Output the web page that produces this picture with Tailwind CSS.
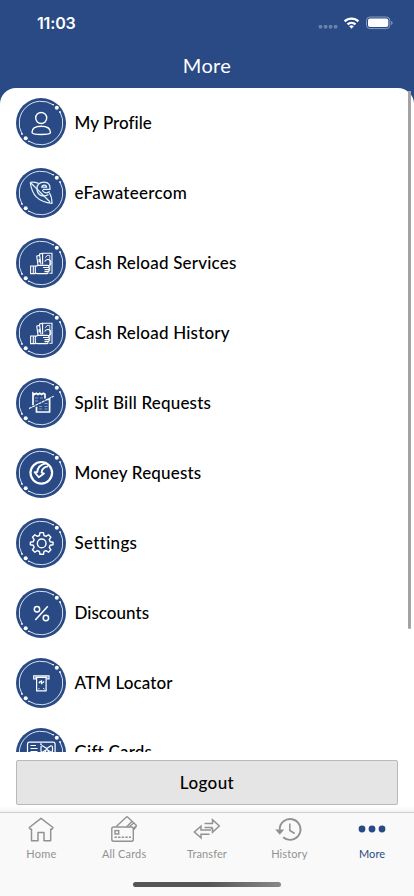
<!DOCTYPE html>
<html lang="en">
<head>
<meta charset="utf-8">
<meta name="viewport" content="width=device-width, initial-scale=1">
<title>More</title>
<script src="https://cdn.jsdelivr.net/npm/@tailwindcss/browser@4"></script>
</head>
<body class="bg-white">
<svg width="0" height="0" class="absolute">
  <defs>
    <g id="disc">
      <circle cx="25" cy="25" r="25" fill="#294a84"/>
      <g fill="none" stroke="#dfe9f3" stroke-width=".95"><path d="M37.2 6.8A22 22 0 0 0 6 36"/><path d="M44 14A22 22 0 0 1 12.8 43.2"/></g>
      <g fill="#fff"><circle cx="40.8" cy="9.7" r="2"/><circle cx="9.7" cy="40.3" r="2"/><circle cx="37.2" cy="6.8" r=".8"/><circle cx="44" cy="14" r=".9"/><circle cx="6" cy="36" r=".9"/><circle cx="12.8" cy="43.2" r=".8"/></g>
    </g>
    <g id="cash" fill="none" stroke="#fff" stroke-width="1.1">
      <path d="M26.6 26.5V15.2H36V35.2H33.4"/>
      <path d="M33.8 33V17.4H31Q30.8 19.2 28.9 19.5" stroke-width=".8"/>
      <path d="M28.7 23.6a3.2 3.2 0 1 1 3.6 4.2"/>
      <path d="M22 27L20.7 18.2L23.6 17.2L25 26.5M23.6 17.2V16L26.4 15.4"/>
      <path d="M23.2 21v3.5" stroke-width="1.4"/>
      <path d="M14.6 28H19.3V35.6H14.6ZM17.3 28V35.6"/>
      <path d="M19.3 28.5L22 27.4H31.5Q33 27.4 33 28.4T31.5 29.5H27M31.5 29.5Q33.4 29.5 33.4 30.6T32 31.6H28.5M32 31.6Q33.4 31.7 33.2 32.7T31.8 33.6H28.5M31.8 33.6Q32.6 35.6 31 35.6H21.5L19.3 35"/>
    </g>
  </defs>
</svg>
<div class="relative flex h-[896px] w-[414px] flex-col overflow-hidden bg-[#294a84] text-black" style="font-family:Lato,'Open Sans',sans-serif">
  <header class="h-[88px] shrink-0 text-white">
    <div class="flex h-[42px] items-center justify-between pr-[21px] pl-[37px]">
      <span class="pt-[4px] font-[Inter] text-[16px] leading-5 font-semibold tracking-[-0.15px]">11:03</span>
      <svg class="mt-[2px]" width="76" height="16" viewBox="317 14 76 16">
        <g fill="#6b82ac"><rect x="318.7" y="25" width="3.6" height="3.6" rx="1"/><rect x="323.8" y="25" width="3.6" height="3.6" rx="1"/><rect x="328.8" y="25" width="3.6" height="3.6" rx="1"/><rect x="333.8" y="25" width="3.6" height="3.6" rx="1"/></g>
        <g fill="none" stroke="#fff" stroke-width="2.3"><path d="M344.6 21.4a9.9 9.9 0 0 1 13.8 0"/><path d="M347.5 24.4a5.8 5.8 0 0 1 8 0"/></g>
        <path d="M349.2 26.3a3.4 3.4 0 0 1 4.6 0L351.5 28.7Z" fill="#fff"/>
        <rect x="366.5" y="17" width="23.3" height="11.6" rx="3.4" fill="none" stroke="#8a9cbf"/>
        <rect x="368" y="18.5" width="20.3" height="8.6" rx="2" fill="#fff"/>
        <path d="M391.2 21v4q1.4-.7 1.4-2t-1.4-2" fill="#8a9cbf"/>
      </svg>
    </div>
    <h1 class="flex h-[46px] items-center justify-center text-[20px] leading-6 tracking-[0.35px]">More</h1>
  </header>

  <main class="relative flex h-[724px] shrink-0 flex-col rounded-t-[16px] bg-white">
    <ul class="h-[664px] overflow-hidden pt-[10px] pl-4 text-[17px] leading-5 font-medium">
      <li class="flex h-[70px] items-start gap-[8.5px]">
        <svg class="shrink-0" width="50" height="50" viewBox="0 0 50 50"><use href="#disc"/><g fill="none" stroke="#fff" stroke-width="1.4"><circle cx="25.2" cy="20" r="5.5"/><path d="M16 34.3C16 30.2 19.5 28.2 25.2 28.2S34.5 30.5 34.5 34.6C34.5 36 30 36.5 25.2 36.5S16 36 16 34.3Z"/></g></svg>
        <span class="mt-[15px] tracking-[0.03px]">My Profile</span></li>
      <li class="flex h-[70px] items-start gap-[8.5px]">
        <svg class="shrink-0" width="50" height="50" viewBox="0 0 50 50"><use href="#disc"/><g fill="none" stroke="#e2f2fa"><path d="M14.2 14.3C16 27 22 34 36 35.3C36 31 35.4 28 33.5 25M14.2 14.3C17.5 13.8 20 14.4 22.5 15.4M14.2 14.3L34 34" stroke-width="1.2"/><path d="M21 21C20.5 16.5 23.5 14.2 28 14.2C32.5 14.2 34.5 17 34 21.3H26.8" stroke-width="1.3"/><path d="M25.8 19.2C26 16.5 30.3 16.3 30.6 19.2ZM21 21C21 26.5 26 30 32.5 26.5M26.5 22C27 25 30.5 25.6 33.8 23.6" stroke-width="1.3"/></g></svg>
        <span class="mt-[15px] tracking-[0.3px]">eFawateercom</span></li>
      <li class="flex h-[70px] items-start gap-[8.5px]">
        <svg class="shrink-0" width="50" height="50" viewBox="0 0 50 50"><use href="#disc"/><use href="#cash"/></svg>
        <span class="mt-[15px] tracking-[0.2px]">Cash Reload Services</span></li>
      <li class="flex h-[70px] items-start gap-[8.5px]">
        <svg class="shrink-0" width="50" height="50" viewBox="0 0 50 50"><use href="#disc"/><use href="#cash"/></svg>
        <span class="mt-[15px] tracking-[0.2px]">Cash Reload History</span></li>
      <li class="flex h-[70px] items-start gap-[8.5px]">
        <svg class="shrink-0" width="50" height="50" viewBox="0 0 50 50"><use href="#disc"/><g fill="none" stroke="#fff" stroke-width="1.7"><path d="M17 27.3V15.3L18.5 16.4L20.2 15.2L22 16.4L23.8 15.2L25.5 16.4L27.3 15.2L29 16.3V20.5"/><path d="M20.5 28.8V34H33.6V21.5H30.5"/><path d="M13 30.6L37.7 18.2" stroke-width="1.1" stroke-dasharray="3 .6"/><path d="M19 20h3M24 20h3M19 23h3M23 28.5h3M28.5 28.5h3M23 31h3M28.5 31h3M28.5 25.5h3" stroke="#8fa4c6" stroke-width=".9"/></g></svg>
        <span class="mt-[15px] tracking-[0.2px]">Split Bill Requests</span></li>
      <li class="flex h-[70px] items-start gap-[8.5px]">
        <svg class="shrink-0" width="50" height="50" viewBox="0 0 50 50"><use href="#disc"/><g fill="none" stroke="#fff"><circle cx="25.3" cy="24.8" r="10.8" stroke-width="2.2"/><path d="M30 15.4C25 16.3 21.6 19.2 21.2 24.2L18.6 24.2L22.8 29.3L28 25.5L25.6 24.6C25.9 21 28.4 18.8 32 18.4" stroke-width="1.8" stroke-linejoin="round"/></g></svg>
        <span class="mt-[15px] tracking-[0.18px]">Money Requests</span></li>
      <li class="flex h-[70px] items-start gap-[8.5px]">
        <svg class="shrink-0" width="50" height="50" viewBox="0 0 50 50"><use href="#disc"/><g fill="none" stroke="#fff" stroke-width="1.5" transform="translate(25.7 25.4) scale(.96) translate(-25.7 -25.4)"><circle cx="25.7" cy="25.4" r="4.5"/><path stroke-linejoin="round" d="M23.9 14.2h3.6l.6 3 2.1.9 2.6-1.7 2.5 2.5-1.7 2.6.9 2.1 3 .6v2.6l-3 .6-.9 2.1 1.7 2.6-2.5 2.5-2.6-1.7-2.1.9-.6 3h-3.6l-.6-3-2.1-.9-2.6 1.7-2.5-2.5 1.7-2.6-.9-2.1-3-.6v-2.6l3-.6.9-2.1-1.7-2.6 2.5-2.5 2.6 1.7 2.1-.9Z"/></g></svg>
        <span class="mt-[15px] tracking-[0.3px]">Settings</span></li>
      <li class="flex h-[70px] items-start gap-[8.5px]">
        <svg class="shrink-0" width="50" height="50" viewBox="0 0 50 50"><use href="#disc"/><g fill="none" stroke="#fff" stroke-width="1.5"><circle cx="21" cy="21.2" r="2.7"/><circle cx="29.9" cy="30" r="2.7"/><path d="M31.8 18.3L19.3 32"/></g></svg>
        <span class="mt-[15px] tracking-[0.02px]">Discounts</span></li>
      <li class="flex h-[70px] items-start gap-[8.5px]">
        <svg class="shrink-0" width="50" height="50" viewBox="0 0 50 50"><use href="#disc"/><g fill="none" stroke="#fff" stroke-width="1.2"><path d="M20 20.8H17.7V17.8H33V20.8H30.7M19.3 19.4H31.4"/><path d="M20.6 19.5V32.8H30.1V19.5"/><path d="M22 31.5l1.5-1.5M28.7 31.5l-1.5-1.5" stroke-width=".9"/><path d="M23 25.2Q24.3 22.7 25.4 24.2T28 23.4M25.5 22.3V26.3" stroke-width="1.3"/></g></svg>
        <span class="mt-[15px] tracking-[0.1px]">ATM Locator</span></li>
      <li class="flex h-[70px] items-start gap-[8.5px]">
        <svg class="shrink-0" width="50" height="50" viewBox="0 0 50 50"><use href="#disc"/><g fill="none" stroke="#fff" stroke-width="1.2"><rect x="11.5" y="14.2" width="27.6" height="20" rx="2"/><path d="M14.5 17.5H20M14.5 20.5H21.5M14.5 23.5H21.5" stroke-width="1"/><path d="M24 16.2h2"/><path d="M30.8 20.6L26.5 17.8Q24.8 17.6 25 19.5V23Q25.3 24.5 27 23.7L30.8 21.5L34.6 23.7Q36.3 24.5 36.5 23V19.5Q36.5 17.6 34.8 17.8ZM30 22L28 27M31.6 22L33.6 27"/></g></svg>
        <span class="mt-[14px] tracking-[0.2px]">Gift Cards</span></li>
    </ul>
    <div class="absolute top-[3px] right-[3px] h-[538px] w-[3px] rounded-b-full bg-[#a3a3a3]"></div>
    <button class="mx-4 mt-[8px] h-[45px] shrink-0 rounded-[2px] border border-[#b9b9b9] bg-[#e5e5e5] text-[17px] leading-5 font-medium tracking-[0.4px]">Logout</button>
    <div class="mt-auto h-[6px] bg-linear-to-b from-white to-[#f3f3f3]"></div>
  </main>

  <nav class="flex h-[84px] shrink-0 flex-col border-t border-[#cfcfcf] bg-[#f9f9f9]">
    <div class="grid grid-cols-5 text-center text-[11px] leading-[14px] text-[#929292]">
      <a class="flex flex-col items-center"><svg width="30" height="34" viewBox="0 0 30 34" fill="none" stroke="#929292" stroke-width="1.5"><path d="M15 5.3L3.3 14.5L4.3 16.2H5.5V27.7H12V19.5H18V27.7H24.7V16.2H25.8L27 14.5Z" stroke-linejoin="round"/></svg><span class="tracking-[0.2px]">Home</span></a>
      <a class="flex flex-col items-center"><svg width="30" height="34" viewBox="0 0 30 34" fill="none" stroke="#929292" stroke-width="1.4"><rect x="2.8" y="14" width="21.5" height="14.3" rx="1.8"/><rect x="6" y="17.6" width="3.7" height="3.4"/><path d="M5.5 24.3H22" stroke-dasharray="2.4 1.2"/><path d="M7 13.8L17.2 4.2Q18 3.5 18.8 4.2L27 12Q27.8 12.8 27 13.7L24.4 17M17.5 14L22.8 8.4M20 14L25 9.8M24 16L26.7 13.2"/></svg><span class="tracking-[0.15px]">All Cards</span></a>
      <a class="flex flex-col items-center"><svg width="30" height="34" viewBox="0 0 30 34" fill="none" stroke="#929292" stroke-width="1.5"><path d="M12.5 10.5H20.5V6.8L27.3 13L20.5 19.2V15.5H19"/><path d="M19 17H9V13.2L2.4 19L9 24.8V21.3H17.5M12.5 14.6H20.5"/></svg><span class="tracking-[0.1px]">Transfer</span></a>
      <a class="flex flex-col items-center"><svg class="-ml-[2px]" width="30" height="34" viewBox="0 0 30 34" fill="none" stroke="#929292" stroke-width="1.9"><path d="M5.7 17A10.4 10.4 0 1 1 9.2 24.2"/><path d="M1.2 16.5H10.2L5.8 21.7Z" fill="#929292" stroke="none"/><path d="M15.8 10.5V17.5L20.7 20.5" stroke-width="1.5"/></svg><span class="-ml-px tracking-[0.1px]">History</span></a>
      <a class="flex flex-col items-center text-[#294a84]"><svg class="-ml-[2px]" width="30" height="34" viewBox="0 0 30 34" fill="#294a84"><circle cx="5" cy="16" r="3.4"/><circle cx="15" cy="16" r="3.4"/><circle cx="25" cy="16" r="3.4"/></svg><span class="-ml-px tracking-[0.1px]">More</span></a>
    </div>
    <div class="mx-auto mt-[21px] h-[5px] w-[148px] rounded-full bg-linear-to-r from-[#555] via-[#555] to-[#888]"></div>
  </nav>
</div>
</body>
</html>
